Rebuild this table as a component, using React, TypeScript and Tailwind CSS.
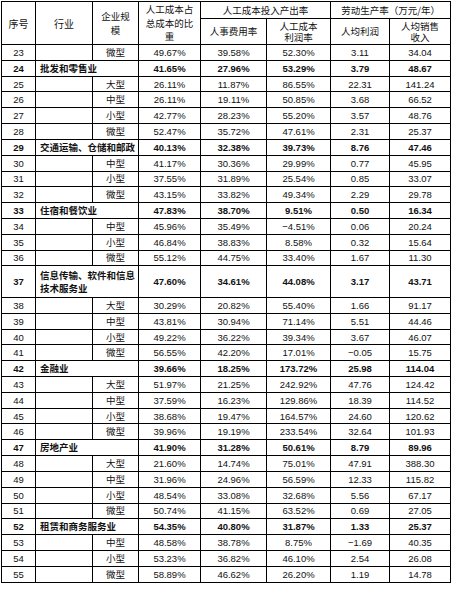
import React from "react";

type Row = {
  n: string;
  label: string;
  label2?: string;
  bold?: boolean;
  v: string[];
};

const rows: Row[] = [
  { n: "23", label: "微型", v: ["49.67%", "39.58%", "52.30%", "3.11", "34.04"] },
  { n: "24", label: "批发和零售业", bold: true, v: ["41.65%", "27.96%", "53.29%", "3.79", "48.67"] },
  { n: "25", label: "大型", v: ["26.11%", "11.87%", "86.55%", "22.31", "141.24"] },
  { n: "26", label: "中型", v: ["26.11%", "19.11%", "50.85%", "3.68", "66.52"] },
  { n: "27", label: "小型", v: ["42.77%", "28.23%", "55.20%", "3.57", "48.76"] },
  { n: "28", label: "微型", v: ["52.47%", "35.72%", "47.61%", "2.31", "25.37"] },
  { n: "29", label: "交通运输、仓储和邮政", bold: true, v: ["40.13%", "32.38%", "39.73%", "8.76", "47.46"] },
  { n: "30", label: "中型", v: ["41.17%", "30.36%", "29.99%", "0.77", "45.95"] },
  { n: "31", label: "小型", v: ["37.55%", "31.89%", "25.54%", "0.85", "33.07"] },
  { n: "32", label: "微型", v: ["43.15%", "33.82%", "49.34%", "2.29", "29.78"] },
  { n: "33", label: "住宿和餐饮业", bold: true, v: ["47.83%", "38.70%", "9.51%", "0.50", "16.34"] },
  { n: "34", label: "中型", v: ["45.96%", "35.49%", "−4.51%", "0.06", "20.24"] },
  { n: "35", label: "小型", v: ["46.84%", "38.83%", "8.58%", "0.32", "15.64"] },
  { n: "36", label: "微型", v: ["55.12%", "44.75%", "33.40%", "1.67", "11.30"] },
  { n: "37", label: "信息传输、软件和信息", label2: "技术服务业", bold: true, v: ["47.60%", "34.61%", "44.08%", "3.17", "43.71"] },
  { n: "38", label: "大型", v: ["30.29%", "20.82%", "55.40%", "1.66", "91.17"] },
  { n: "39", label: "中型", v: ["43.81%", "30.94%", "71.14%", "5.51", "44.46"] },
  { n: "40", label: "小型", v: ["49.22%", "36.22%", "39.34%", "3.67", "46.07"] },
  { n: "41", label: "微型", v: ["56.55%", "42.20%", "17.01%", "−0.05", "15.75"] },
  { n: "42", label: "金融业", bold: true, v: ["39.66%", "18.25%", "173.72%", "25.98", "114.04"] },
  { n: "43", label: "大型", v: ["51.97%", "21.25%", "242.92%", "47.76", "124.42"] },
  { n: "44", label: "中型", v: ["37.59%", "16.23%", "129.86%", "18.39", "114.52"] },
  { n: "45", label: "小型", v: ["38.68%", "19.47%", "164.57%", "24.60", "120.62"] },
  { n: "46", label: "微型", v: ["39.96%", "19.19%", "233.54%", "32.64", "101.93"] },
  { n: "47", label: "房地产业", bold: true, v: ["41.90%", "31.28%", "50.61%", "8.79", "89.96"] },
  { n: "48", label: "大型", v: ["21.60%", "14.74%", "75.01%", "47.91", "388.30"] },
  { n: "49", label: "中型", v: ["31.96%", "24.96%", "56.59%", "12.33", "115.82"] },
  { n: "50", label: "小型", v: ["48.54%", "33.08%", "32.68%", "5.56", "67.17"] },
  { n: "51", label: "微型", v: ["50.74%", "41.15%", "63.52%", "0.69", "27.05"] },
  { n: "52", label: "租赁和商务服务业", bold: true, v: ["54.35%", "40.80%", "31.87%", "1.33", "25.37"] },
  { n: "53", label: "中型", v: ["48.58%", "38.78%", "8.75%", "−1.69", "40.35"] },
  { n: "54", label: "小型", v: ["53.23%", "36.82%", "46.10%", "2.54", "26.08"] },
  { n: "55", label: "微型", v: ["58.89%", "46.62%", "26.20%", "1.19", "14.78"] },
];

const cjk = "font-['Noto_Sans_CJK_SC',sans-serif]";
const num = "font-['Liberation_Sans','Noto_Sans_CJK_SC',sans-serif]";

export default function App() {
  return (
    <div className="w-[454px] h-[589px] bg-white pl-[1px] pt-[1px] text-[#111]">
      <table className="border-collapse table-fixed w-[449px] text-[9.5px] leading-[11px]">
        <colgroup>
          <col className="w-[34px]" />
          <col className="w-[57px]" />
          <col className="w-[46px]" />
          <col className="w-[62px]" />
          <col className="w-[66px]" />
          <col className="w-[64px]" />
          <col className="w-[59px]" />
          <col className="w-[61px]" />
        </colgroup>
        <thead className={cjk}>
          <tr className="h-[17px]">
            <th rowSpan={2} className="border border-black font-normal text-center align-middle text-[10px]">序号</th>
            <th rowSpan={2} className="border border-black font-normal text-center align-middle text-[10px]">行业</th>
            <th rowSpan={2} className="border border-black font-normal text-center align-middle px-[6px] leading-[14px]">企业规模</th>
            <th rowSpan={2} className="border border-black font-normal text-center align-top px-[5px] pt-[1px] leading-[13.5px]">人工成本占总成本的比重</th>
            <th colSpan={2} className="border border-black font-normal text-center align-middle">人工成本投入产出率</th>
            <th colSpan={2} className="border border-black font-normal text-center align-middle whitespace-nowrap">劳动生产率（万元/年）</th>
          </tr>
          <tr className="h-[26px]">
            <th className="border border-black font-normal text-center align-middle">人事费用率</th>
            <th className="border border-black font-normal text-center align-middle px-[8px] leading-[11px]">人工成本利润率</th>
            <th className="border border-black font-normal text-center align-middle">人均利润</th>
            <th className="border border-black font-normal text-center align-middle px-[8px] leading-[11px]">人均销售收入</th>
          </tr>
        </thead>
        <tbody>
          {rows.map((r) => (
            <tr key={r.n} className={r.label2 ? "h-[31.6px]" : "h-[15.82px]"}>
              <td className={`border border-black text-center align-middle p-0 ${num} ${r.bold ? "font-bold" : ""}`}>{r.n}</td>
              {r.bold ? (
                <td colSpan={2} className={`border border-black text-left align-middle py-0 pl-[4px] pr-0 font-bold whitespace-nowrap overflow-hidden ${cjk} ${r.label2 ? "leading-[13px]" : ""}`}>
                  {r.label}
                  {r.label2 ? (
                    <>
                      <br />
                      {r.label2}
                    </>
                  ) : null}
                </td>
              ) : (
                <>
                  <td className="border border-black p-0"></td>
                  <td className={`border border-black text-center align-middle p-0 ${cjk}`}>{r.label}</td>
                </>
              )}
              {r.v.map((x, i) => (
                <td key={i} className={`border border-black text-center align-middle p-0 ${num} ${r.bold ? "font-bold" : ""}`}>
                  {x}
                </td>
              ))}
            </tr>
          ))}
        </tbody>
      </table>
    </div>
  );
}
